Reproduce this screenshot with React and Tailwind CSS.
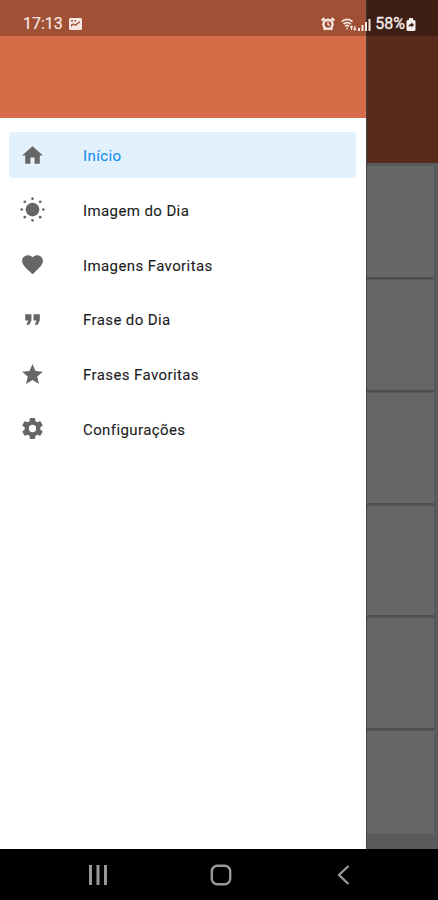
import { useState } from "react"
import { MdHome, MdFavorite, MdFormatQuote, MdStar } from "react-icons/md"

const SunIcon = () => (
  <svg viewBox="0 0 24 24" width="1em" height="1em" fill="currentColor">
    <circle cx="12" cy="12" r="6.6" />
    <circle cx="12" cy="1.6" r="1.3" />
    <circle cx="12" cy="22.4" r="1.3" />
    <circle cx="1.6" cy="12" r="1.3" />
    <circle cx="22.4" cy="12" r="1.3" />
    <circle cx="4.6" cy="4.6" r="1.3" />
    <circle cx="19.4" cy="4.6" r="1.3" />
    <circle cx="4.6" cy="19.4" r="1.3" />
    <circle cx="19.4" cy="19.4" r="1.3" />
  </svg>
)

const CogIcon = () => (
  <svg viewBox="0 0 24 24" width="1em" height="1em" fill="currentColor">
    <path d="M12 15.5A3.5 3.5 0 0 1 8.5 12 3.5 3.5 0 0 1 12 8.5a3.5 3.5 0 0 1 3.5 3.5 3.5 3.5 0 0 1-3.5 3.5m7.43-2.53c.04-.32.07-.64.07-.97s-.03-.66-.07-1l2.11-1.63c.19-.15.24-.42.12-.64l-2-3.46c-.12-.22-.39-.31-.61-.22l-2.49 1c-.52-.39-1.06-.73-1.69-.98l-.37-2.65A.506.506 0 0 0 14 2h-4c-.25 0-.46.18-.5.42l-.37 2.65c-.63.25-1.17.59-1.69.98l-2.49-1c-.22-.09-.49 0-.61.22l-2 3.46c-.13.22-.07.49.12.64L4.57 11c-.04.34-.07.67-.07 1s.03.65.07.97l-2.11 1.66c-.19.15-.25.42-.12.64l2 3.46c.12.22.39.3.61.22l2.49-1.01c.52.4 1.06.74 1.69.99l.37 2.65c.04.24.25.42.5.42h4c.25 0 .46-.18.5-.42l.37-2.65c.63-.26 1.17-.59 1.69-.99l2.49 1.01c.22.08.49 0 .61-.22l2-3.46c.12-.22.07-.49-.12-.64z" />
  </svg>
)

const items = [
  { label: "Início", icon: MdHome },
  { label: "Imagem do Dia", icon: SunIcon },
  { label: "Imagens Favoritas", icon: MdFavorite },
  { label: "Frase do Dia", icon: MdFormatQuote },
  { label: "Frases Favoritas", icon: MdStar },
  { label: "Configurações", icon: CogIcon },
]

function StatusBar() {
  return (
    <div className="absolute inset-x-0 top-0 h-9 pt-3 pl-[23px] pr-[22px] flex items-center bg-black/26 text-[#f7e9e2]">
      <span className="text-base leading-6 [-webkit-text-stroke:0.2px]">17:13</span>
      <svg className="ml-1.5" width="13" height="12" viewBox="0 0 13 12">
        <rect width="13" height="12" rx="1.5" fill="currentColor" />
        <path d="M2 9V6.500l2.500-1.300 1.500 1.300L11 3v1.500L6.500 8 4.500 6.700zM2 2h2v1.500H2zM5.500 2H7v1.500H5.500z" fill="#9d4f35" />
      </svg>

      {/* alarm, wifi, signal */}
      <svg className="ml-auto" width="14" height="14" viewBox="0 0 14 14">
        <circle cx="7" cy="7.3" r="5.8" fill="currentColor" />
        <path d="M.8 3.6L3.4 1M13.2 3.6L10.6 1M2.8 12.8l1.3-1.5M11.2 12.8l-1.3-1.5" stroke="currentColor" strokeWidth="2.4" />
        <circle cx="7" cy="7.3" r="3.4" fill="#9d4f35" />
        <path d="M7 4.500v3l1.800 1" stroke="currentColor" strokeWidth="1.300" fill="none" />
      </svg>
      <svg className="ml-[6px]" width="16" height="13" viewBox="0 0 16 13" fill="none" stroke="currentColor" strokeWidth="1.700">
        <path d="M.7 3.700c3-3 7.800-3 10.800 0M2.500 6.100c2-2 5.200-2 7.200 0M4.300 8.300c1.200-1.100 2.500-1.100 3.700 0" />
        <path d="M6.200 9.500v2M10.500 12V8M9.200 9.300L10.500 8l1.200 1.300M13.800 8v4M12.600 10.700l1.200 1.300 1.200-1.300" strokeWidth="1.200" />
      </svg>
      <svg className="ml-[1px]" width="13" height="13" viewBox="0 0 13 13" fill="currentColor">
        <path d="M0 10h2v3H0zM3.500 7h2v6h-2zM7 4h2v9H7zM10.500 1h2v12h-2z" />
      </svg>
      <span className="ml-[4px] text-base leading-6 text-[#f4efed] [-webkit-text-stroke:0.3px]">58%</span>
      <svg className="ml-[1px]" width="10" height="13" viewBox="0 0 10 13">
        <path d="M3 0h4v2h1.500l1 1v9l-1 1h-7l-1-1V3l1-1H3z" fill="#f4efed" />
        <path d="M2.500 9c0-2 1-3 2.800-3V4.200L8 7 5.300 9.500V8C4 8 3.200 8.300 2.500 9z" fill="#401f14" />
      </svg>
    </div>
  )
}

function Drawer({ active, onSelect }) {
  return (
    <aside className="w-[366px] shrink-0 flex flex-col bg-white">
      <div className="h-[118px] bg-[#d76d48]" />
      <nav className="pt-3.5 pl-[9px] pr-2.5 flex flex-col gap-[8.8px]">
        {items.map(({ label, icon: Icon }) => (
          <button
            key={label}
            onClick={() => onSelect(label)}
            className={`h-[46px] pl-[11px] flex items-center rounded text-left ${active === label ? "bg-[#e3f1fc] text-[#1590f0]" : "text-[#1c1c1c]"}`}
          >
            <span className="text-[25px] text-[#666]"><Icon /></span>
            <span className="ml-[38px] pt-[2px] text-[15px] leading-5 tracking-[0.4px] [-webkit-text-stroke:0.1px]">{label}</span>
          </button>
        ))}
      </nav>
    </aside>
  )
}

// dimmed page that shows beside the open drawer
function Backdrop() {
  return (
    <main className="flex-1 flex flex-col bg-[#5a5a5a] border-l border-[#444]">
      <div className="h-[163px] bg-[#562b1b]" />
      <div className="pt-[3px] pr-1 flex flex-col gap-[3px]">
        {[0, 1, 2, 3, 4, 5].map(i => (
          <div key={i} className="h-[109.8px] first:h-[111px] last:h-[103px] bg-[#666] shadow-[0_2px_1px_#4e4e4e] last:shadow-none" />
        ))}
      </div>
    </main>
  )
}

function NavBar() {
  return (
    <footer className="h-[51px] flex items-center bg-black text-[#999]">
      <svg className="ml-[88px]" width="20" height="20" viewBox="0 0 20 20" fill="currentColor">
        <path d="M1 0h3v20H1zM8.500 0h3v20h-3zM16 0h3v20h-3z" />
      </svg>
      <svg className="ml-[102px]" width="22" height="22" viewBox="0 0 22 22" fill="none" stroke="currentColor" strokeWidth="2.400">
        <rect x="1.800" y="1.800" width="18.400" height="18.400" rx="5.500" />
      </svg>
      <svg className="ml-[105px]" width="13" height="20" viewBox="0 0 13 20" fill="none" stroke="currentColor" strokeWidth="2.300">
        <path d="M11.500 1L2 10l9.500 9" />
      </svg>
    </footer>
  )
}

export default function App() {
  const [active, setActive] = useState("Início")

  return (
    <div className="relative w-full h-screen flex flex-col overflow-hidden font-['Roboto',sans-serif]">
      <div className="h-[849px] flex overflow-hidden">
        <Drawer active={active} onSelect={setActive} />
        <Backdrop />
      </div>
      <NavBar />
      <StatusBar />
    </div>
  )
}
